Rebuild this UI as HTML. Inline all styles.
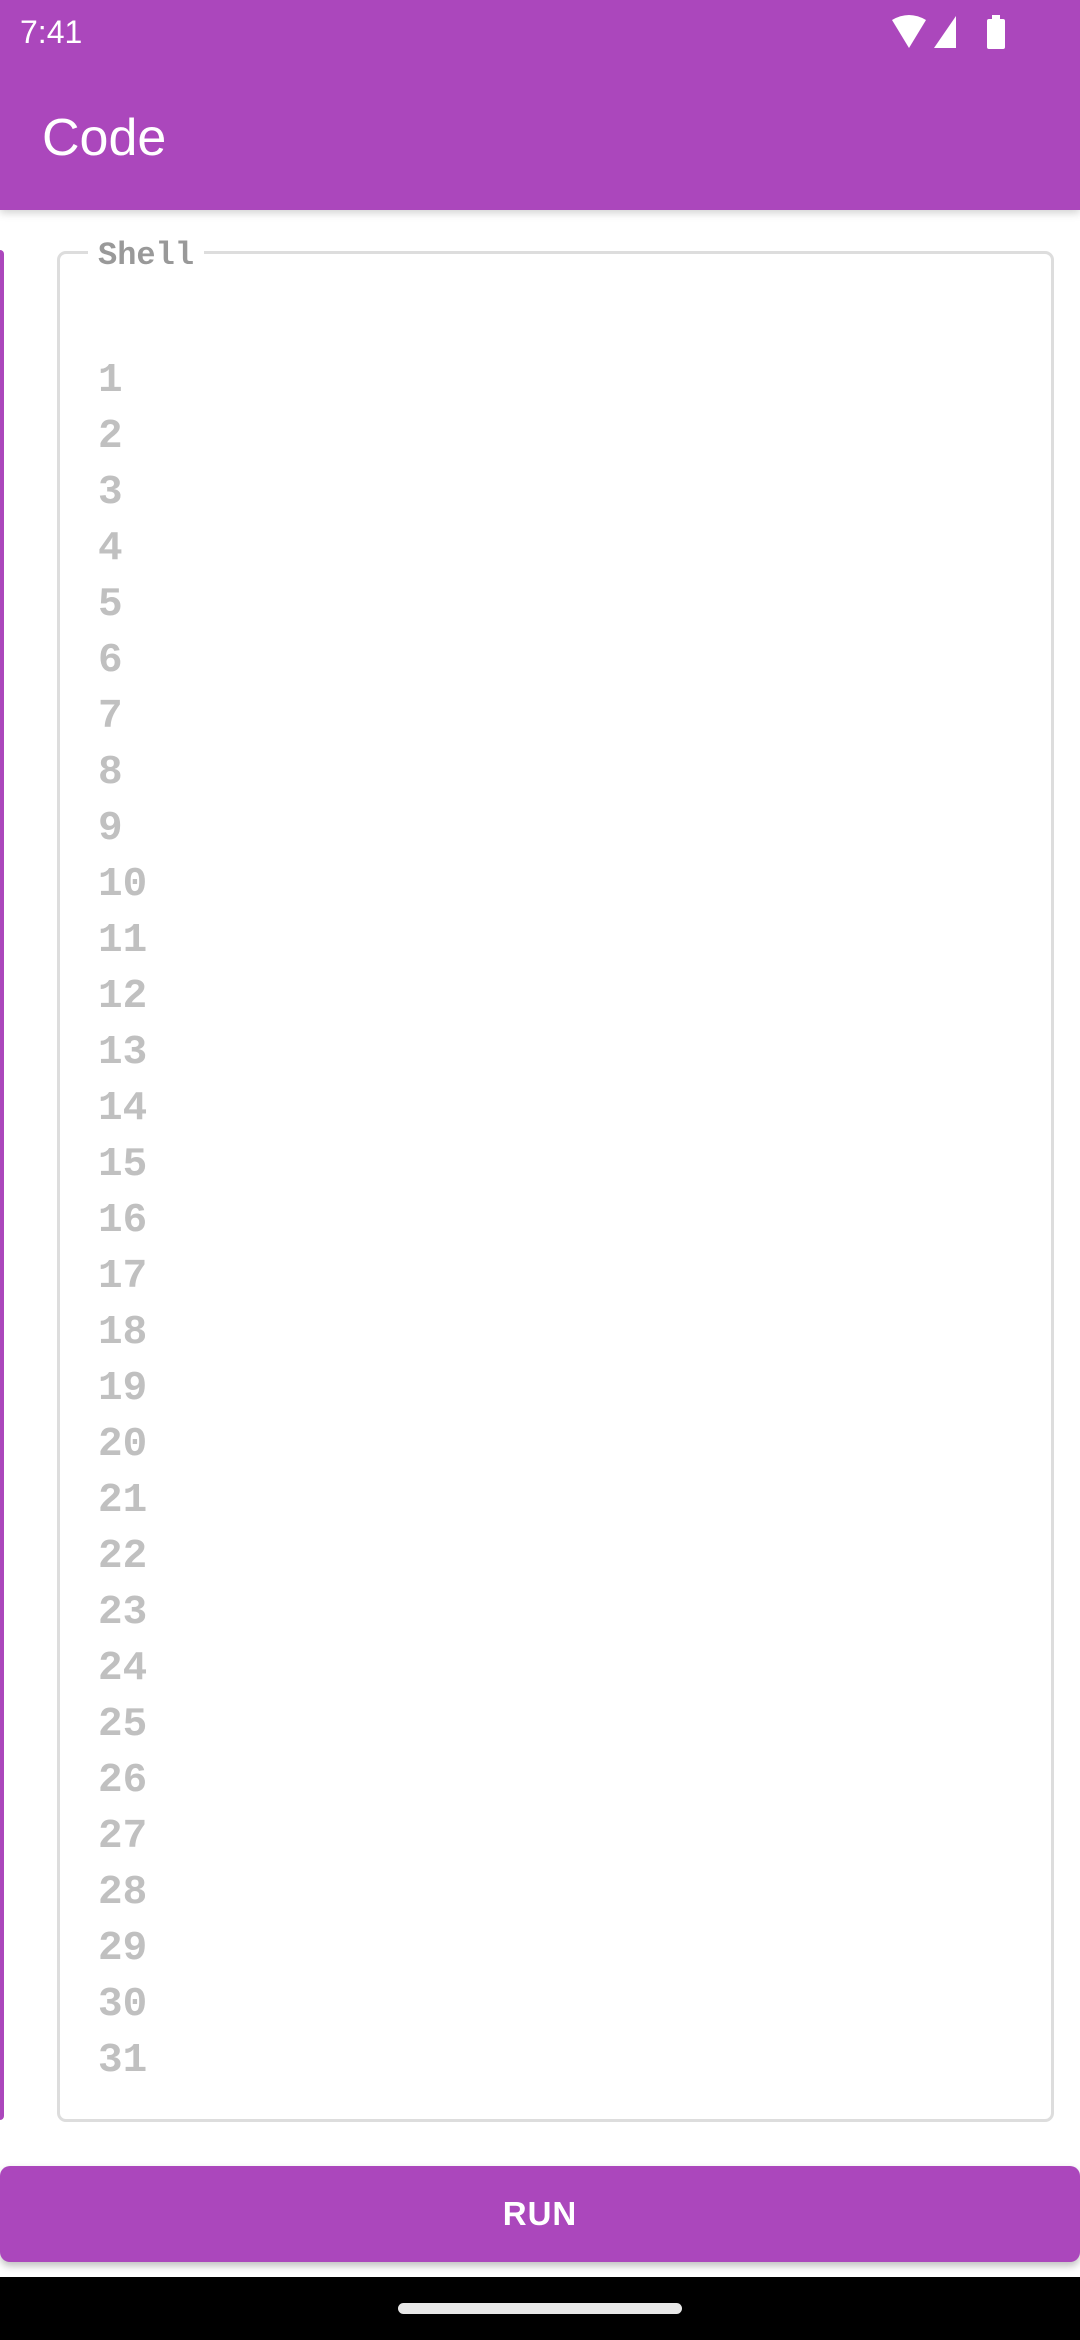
<!DOCTYPE html>
<html><head><meta charset="utf-8"><style>
*{margin:0;padding:0;box-sizing:border-box}
body{width:1080px;height:2340px;position:relative;background:#fff;overflow:hidden;font-family:"Liberation Sans",sans-serif}
.bar{position:absolute;left:0;top:0;width:1080px;height:210px;background:#AB47BC;box-shadow:0 3px 8px rgba(0,0,0,.18)}
.time{position:absolute;left:20px;top:14px;color:#fff;font-size:32px}
.title{position:absolute;left:42px;top:108px;color:#fff;font-size:52px;font-weight:500}
.strip{position:absolute;left:-4px;top:250px;width:8px;height:1870px;background:#AB47BC;border-radius:4px}
.box{position:absolute;left:57px;top:251px;width:997px;height:1871px;border:3px solid #ddd;border-radius:9px}
.lbl{position:absolute;left:88px;top:237px;background:#fff;padding:0 10px;color:#999;font:bold 32px "Liberation Mono",monospace}
.ln{position:absolute;left:98px;color:#c0c0c0;font:bold 41px "Liberation Mono",monospace;line-height:56px}
.run{position:absolute;left:0;top:2166px;width:1080px;height:96px;background:#AB47BC;border-radius:10px;box-shadow:0 4px 8px rgba(0,0,0,.25);color:#fff;font-size:33px;font-weight:bold;text-align:center;line-height:96px;letter-spacing:1px}
.nav{position:absolute;left:0;top:2277px;width:1080px;height:63px;background:#000}
.handle{position:absolute;left:398px;top:2303px;width:284px;height:11px;border-radius:6px;background:#e8e8e8}
</style></head><body>
<div class="bar">
<div class="time">7:41</div>
<svg style="position:absolute;left:890px;top:14px" width="130" height="36" viewBox="0 0 130 36">
<path d="M2 6 Q19 -4 36 6 L19 34 Z" fill="#fff"/>
<path d="M44 34 L66 34 L66 2 Z" fill="#fff"/>
<rect x="97" y="5" width="18" height="30" rx="2" fill="#fff"/><rect x="102" y="1" width="8" height="5" fill="#fff"/>
</svg>
<div class="title">Code</div>
</div>
<div class="strip"></div>
<div class="box"></div>
<div class="lbl">Shell</div>
<div class="ln" style="top:353px">1<br>2<br>3<br>4<br>5<br>6<br>7<br>8<br>9<br>10<br>11<br>12<br>13<br>14<br>15<br>16<br>17<br>18<br>19<br>20<br>21<br>22<br>23<br>24<br>25<br>26<br>27<br>28<br>29<br>30<br>31</div>
<div class="run">RUN</div>
<div class="nav"></div>
<div class="handle"></div>
</body></html>
